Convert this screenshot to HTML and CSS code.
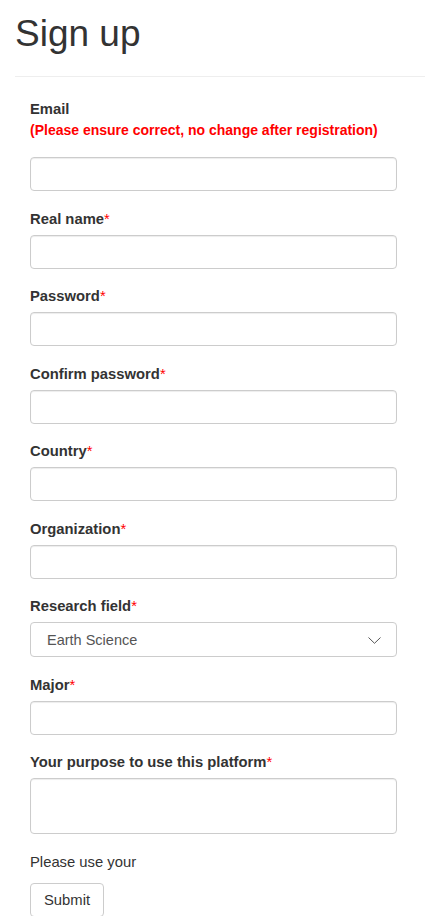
FILE: index.html
```html
<!DOCTYPE html>
<html lang="en">
<head>
<meta charset="utf-8">
<title>Sign up</title>
<link rel="stylesheet" href="styles.css">
</head>
<body>
<div class="page">
  <header class="page-header">
    <h1 class="title">Sign up</h1>
  </header>
  <form class="form">
    <div class="group">
      <label class="label">Email<br><span class="warn">(Please ensure correct, no change after registration)</span></label>
      <input class="control" type="text">
    </div>
    <div class="group">
      <label class="label">Real name<span class="req">*</span></label>
      <input class="control" type="text">
    </div>
    <div class="group">
      <label class="label">Password<span class="req">*</span></label>
      <input class="control" type="password">
    </div>
    <div class="group">
      <label class="label">Confirm password<span class="req">*</span></label>
      <input class="control" type="password">
    </div>
    <div class="group">
      <label class="label">Country<span class="req">*</span></label>
      <input class="control" type="text">
    </div>
    <div class="group">
      <label class="label">Organization<span class="req">*</span></label>
      <input class="control" type="text">
    </div>
    <div class="group">
      <label class="label">Research field<span class="req">*</span></label>
      <div class="select">
        <span class="select-value">Earth Science</span>
        <svg class="chevron" width="13" height="7" viewBox="0 0 13 7"><path d="M0.5 0.5 L6.5 6.3 L12.5 0.5" fill="none" stroke="#555" stroke-width="1"/></svg>
      </div>
    </div>
    <div class="group">
      <label class="label">Major<span class="req">*</span></label>
      <input class="control" type="text">
    </div>
    <div class="group">
      <label class="label">Your purpose to use this platform<span class="req">*</span></label>
      <textarea class="control area"></textarea>
    </div>
    <p class="note">Please use your</p>
    <button class="btn" type="button">Submit</button>
  </form>
</div>
</body>
</html>
```

FILE: styles.css
```css
* { box-sizing: border-box; }
html, body { margin: 0; padding: 0; background: #fff; }
body {
  font-family: "Liberation Sans", Arial, sans-serif;
  font-size: 14.8px;
  line-height: 20px;
  color: #333;
  overflow: hidden;
}
.page { width: 425px; }
.page-header {
  margin-left: 15px;
  padding-top: 14px;
  padding-bottom: 22px;
  border-bottom: 1px solid #eee;
}
.title {
  margin: 0;
  font-size: 37px;
  line-height: 40px;
  font-weight: 500;
  color: #333;
}
.form {
  padding: 22px 28px 0 30px;
  display: flex;
  flex-direction: column;
}
.group {
  display: flex;
  flex-direction: column;
  margin-bottom: 17.5px;
}
.label {
  font-weight: bold;
  margin-bottom: 6px;
}
.warn {
  display: inline-block;
  color: #f00;
  font-size: 14px;
  margin-top: 1px;
  margin-bottom: 11px;
}
.req { color: #f00; font-weight: normal; }
.control {
  display: block;
  width: 100%;
  height: 34px;
  border: 1px solid #ccc;
  border-radius: 4px;
  background: #fff;
  font: inherit;
  padding: 6px 12px;
  box-shadow: inset 0 1px 1px rgba(0,0,0,0.075);
}
.area { height: 56px; resize: none; }
.select {
  height: 35px;
  border: 1px solid #ccc;
  border-radius: 4px;
  display: flex;
  align-items: center;
  justify-content: space-between;
  padding: 0 15px 0 16px;
  color: #555;
  font-size: 14.5px;
}
.chevron { margin-top: 1px; }
.note {
  margin: 0 0 11px;
}
.btn {
  align-self: flex-start;
  height: 34px;
  padding: 6px 13px;
  border: 1px solid #ccc;
  border-radius: 4px;
  background: #fff;
  color: #333;
  font: inherit;
}
```
